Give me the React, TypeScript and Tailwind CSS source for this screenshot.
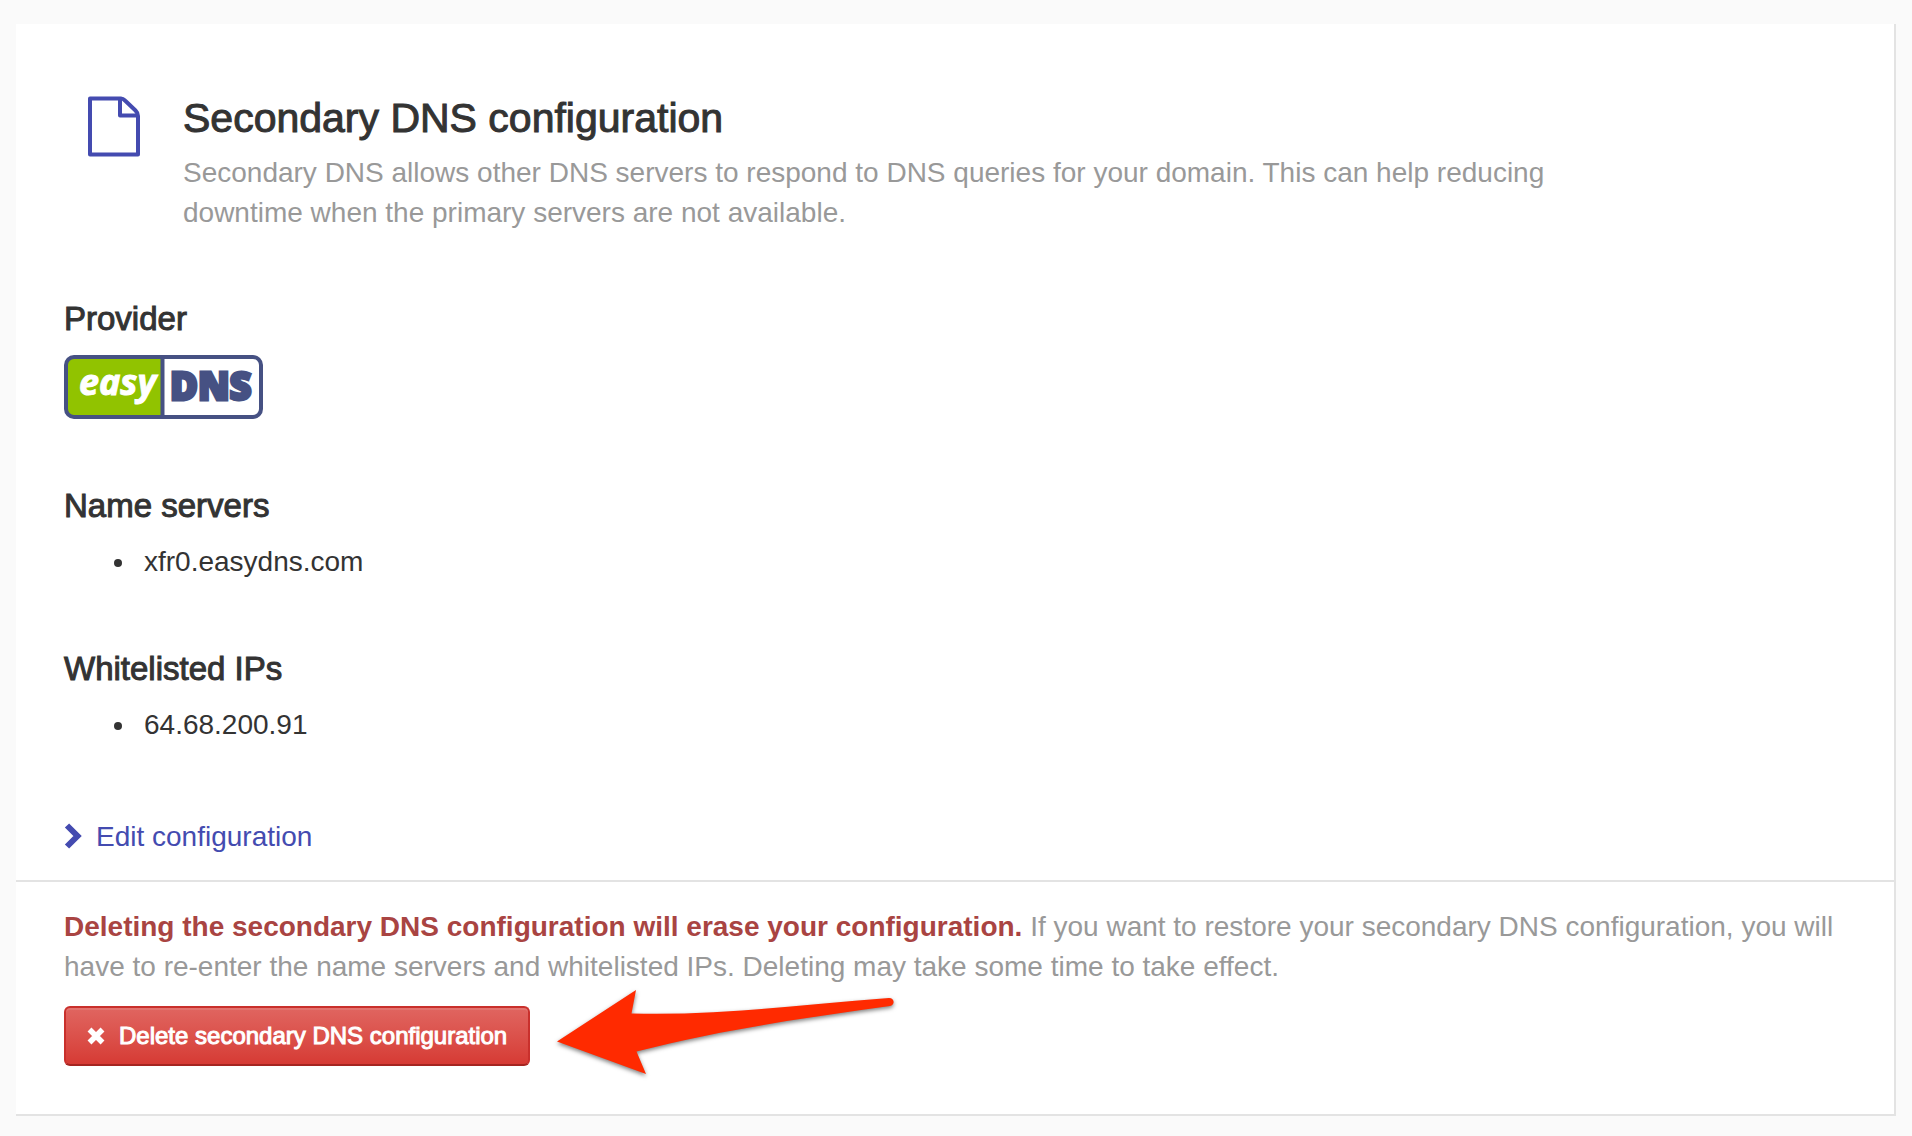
import React from "react";

const heading = "text-[33px] leading-10 font-normal [-webkit-text-stroke:1px_#333333]";

function FileIcon() {
  return (
    <svg viewBox="0 0 52 62" className="h-[62px] w-[52px] shrink-0" fill="none" stroke="#444bb0" strokeWidth="4" strokeLinejoin="round" aria-hidden="true">
      <path d="M2 2.5H33Q35 2.5 37 4.5L47.5 14.5Q50 17 50 20V58.5H2Z" />
      <path d="M32 3V19.5H50" />
    </svg>
  );
}

function EasyDnsLogo() {
  return (
    <svg viewBox="0 0 200 64" className="h-16 w-[200px]" role="img" aria-label="easyDNS">
      <rect x="2" y="2" width="195" height="60" rx="8" fill="#ffffff" />
      <path d="M98 2H10Q2 2 2 10V54Q2 62 10 62H98Z" fill="#91c300" />
      <rect x="2" y="2" width="195" height="60" rx="8" fill="none" stroke="#465183" strokeWidth="4" />
      <path d="M98.5 2V62" stroke="#465183" strokeWidth="4" />
      <text x="15" y="40" fill="#ffffff" stroke="#ffffff" strokeWidth="1" fontFamily="'Noto Sans', sans-serif" fontStyle="italic" fontWeight="700" fontSize="36">easy</text>
      <text x="106" y="45" fill="#465183" stroke="#465183" strokeWidth="3" fontFamily="'Open Sans', sans-serif" fontWeight="800" fontSize="38">DNS</text>
    </svg>
  );
}

function ChevronIcon() {
  return (
    <svg viewBox="0 0 18 28" className="h-7 w-[18px] shrink-0" fill="none" stroke="#444bb0" strokeWidth="6" aria-hidden="true">
      <path d="M3 2.5L13.5 13L3 23.5" />
    </svg>
  );
}

function CrossIcon() {
  return (
    <svg viewBox="0 0 18 18" className="h-[18px] w-[18px] shrink-0" fill="none" stroke="#ffffff" strokeWidth="5.5" aria-hidden="true">
      <path d="M2.5 2.5L15.5 15.5M15.5 2.5L2.5 15.5" />
    </svg>
  );
}

function Arrow() {
  return (
    <svg viewBox="0 0 350 96" className="absolute -top-4 left-full ml-6 h-24 w-[350px] overflow-visible drop-shadow-[0_2px_2px_rgba(0,0,0,0.5)]" aria-hidden="true">
      <path d="M3 51.5L82 0L77.5 23.5C160 26 245 15 335 8C341 8 341 15 336 16C250 28 165 40 82.5 61.5L92 84Z" fill="#ff2a00" />
    </svg>
  );
}

function Section({ title, item }: { title: string; item: string }) {
  return (
    <section>
      <h2 className={heading}>{title}</h2>
      <ul className="mt-4 pl-[50px]">
        <li className="flex items-center gap-[22px]">
          <span className="mt-0.5 size-2 rounded-full bg-[#333333]" aria-hidden="true" />
          {item}
        </li>
      </ul>
    </section>
  );
}

export default function App() {
  return (
    <div className="min-h-screen bg-[#fafafa] px-4 pt-6 pb-5 font-['Liberation_Sans',Arial,sans-serif] text-[28px] leading-10 text-[#333333]">
      <main className="border-r-2 border-b-2 border-[#e3e3e3] bg-white">
        <div className="flex flex-col px-12 pt-[70px] pb-[23px]">
          <header className="flex gap-[43px] pl-6">
            <div className="pt-0.5">
              <FileIcon />
            </div>
            <div className="max-w-[1440px]">
              <h1 className="text-[41px] leading-[48px] font-normal [-webkit-text-stroke:1px_#333333]">Secondary DNS configuration</h1>
              <p className="mt-[11px] text-[#999999]">
                Secondary DNS allows other DNS servers to respond to DNS queries for your domain. This can help reducing downtime when the primary servers are not available.
              </p>
            </div>
          </header>
          <div className="mt-[66px] flex flex-col gap-[67px]">
            <section>
              <h2 className={heading}>Provider</h2>
              <div className="mt-4 flex">
                <EasyDnsLogo />
              </div>
            </section>
            <Section title="Name servers" item="xfr0.easydns.com" />
            <Section title="Whitelisted IPs" item="64.68.200.91" />
          </div>
          <a href="#edit" className="mt-[72px] flex items-center gap-3.5 self-start text-[#444bb0]">
            <ChevronIcon />
            Edit configuration
          </a>
        </div>
        <div className="border-t-2 border-[#e3e3e3] px-12 pt-[25px] pb-12">
          <p className="text-[#999999]">
            <strong className="font-bold text-[#a94442]">Deleting the secondary DNS configuration will erase your configuration.</strong> If you want to restore your secondary DNS configuration, you will have to re-enter the name servers and whitelisted IPs. Deleting may take some time to take effect.
          </p>
          <div className="relative mt-[19px] w-fit">
            <button
              type="button"
              className="flex h-[60px] items-center gap-3.5 rounded-md border-2 border-[#c9302c] border-b-[#a52521] bg-linear-to-b from-[#e06560] to-[#d63a34] px-[21px] text-[24px] leading-8 whitespace-nowrap text-white [-webkit-text-stroke:1px_#ffffff] shadow-[inset_0_2px_0_rgba(255,255,255,0.1)]"
            >
              <CrossIcon />
              Delete secondary DNS configuration
            </button>
            <Arrow />
          </div>
        </div>
      </main>
    </div>
  );
}
